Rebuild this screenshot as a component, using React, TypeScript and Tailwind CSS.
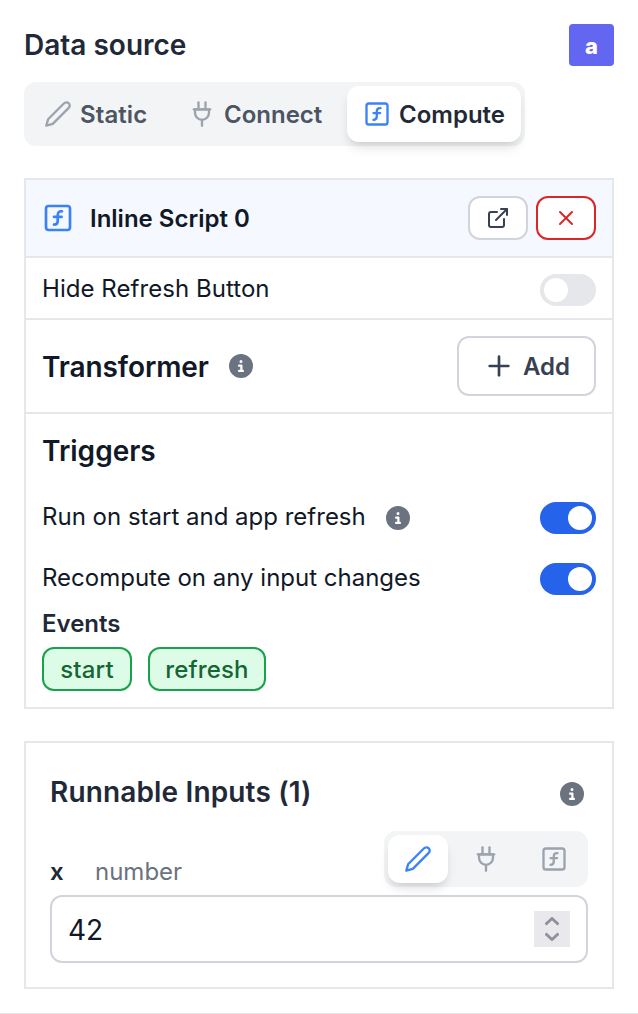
import type { ReactNode } from 'react';
import { FaCircleInfo } from 'react-icons/fa6';

type IconProps = { size?: number; className?: string };

function Icon({ size = 28, className = '', children }: IconProps & { children: ReactNode }) {
  return (
    <svg
      width={size}
      height={size}
      viewBox="0 0 24 24"
      fill="none"
      stroke="currentColor"
      strokeWidth="2"
      strokeLinecap="round"
      strokeLinejoin="round"
      className={`shrink-0 ${className}`}
    >
      {children}
    </svg>
  );
}

const Pencil = (p: IconProps) => (
  <Icon {...p}>
    <path d="M17 3a2.85 2.83 0 1 1 4 4L7.5 20.5 2 22l1.5-5.5Z" />
  </Icon>
);

const Plug = (p: IconProps) => (
  <Icon {...p}>
    <path d="M9 2v6" />
    <path d="M15 2v6" />
    <path d="M12 17v5" />
    <path d="M5 8h14" />
    <path d="M6 11V8h12v3a6 6 0 1 1-12 0Z" />
  </Icon>
);

const FunctionSquare = (p: IconProps) => (
  <Icon {...p}>
    <rect width="18" height="18" x="3" y="3" rx="2" />
    <path d="M9 17c2 0 2.8-1 2.8-2.8V10c0-2 1-3.3 3.2-3" />
    <path d="M9 11.2h5.7" />
  </Icon>
);

const ExternalLink = (p: IconProps) => (
  <Icon {...p}>
    <path d="M18 13v6a2 2 0 0 1-2 2H5a2 2 0 0 1-2-2V8a2 2 0 0 1 2-2h6" />
    <path d="M15 3h6v6" />
    <path d="M10 14 21 3" />
  </Icon>
);

const Close = (p: IconProps) => (
  <Icon {...p}>
    <path d="M18 6 6 18" />
    <path d="m6 6 12 12" />
  </Icon>
);

const Plus = (p: IconProps) => (
  <Icon {...p}>
    <path d="M5 12h14" />
    <path d="M12 5v14" />
  </Icon>
);

const activeShadow = 'shadow-[0_8px_12px_-2px_rgba(0,0,0,0.1),0_4px_8px_-4px_rgba(0,0,0,0.1)]';

function Toggle({ on = false }: { on?: boolean }) {
  return (
    <button
      role="switch"
      aria-checked={on}
      className={`flex h-8 w-14 shrink-0 items-center rounded-full px-1 ${on ? 'justify-end bg-[#2563eb]' : 'justify-start bg-[#e5e7eb]'}`}
    >
      <span className="size-6 rounded-full bg-white" />
    </button>
  );
}

function Pill({ className, children }: { className: string; children: ReactNode }) {
  return (
    <span
      className={`flex h-11 items-center justify-center rounded-xl border-2 border-[#16a34a] bg-[#dcfce7] pt-0.5 text-[24px] font-medium tracking-[0.15px] text-[#166534] ${className}`}
    >
      {children}
    </span>
  );
}

export default function App() {
  return (
    <div className="flex h-[1014px] w-[638px] flex-col overflow-hidden border-b border-[#e5e7eb] bg-white font-['Inter',sans-serif] text-[24px] leading-8 text-[#111827]">
      <header className="flex items-center justify-between px-6 pt-6">
        <h1 className="text-[28px] font-semibold text-[#1f2937]">Data source</h1>
        <span className="flex h-[42px] w-[45px] items-center justify-center rounded bg-[#6366f1] pt-0.5 text-[22px] font-extrabold text-white">
          a
        </span>
      </header>

      <div className="mt-4 ml-6 flex h-16 w-[501px] shrink-0 rounded-xl bg-[#f3f4f6] p-1 font-semibold text-[#4b5563]">
        <button className="flex w-[136px] items-center gap-2 pl-4">
          <Pencil className="text-[#9ca3af]" />
          <span className="pt-0.5 tracking-[0.1px]">Static</span>
        </button>
        <button className="flex w-[183px] items-center gap-2 pl-6">
          <Plug className="text-[#9ca3af]" />
          <span className="pt-0.5">Connect</span>
        </button>
        <button
          className={`flex w-[174px] items-center gap-2 rounded-xl bg-white pl-4 text-[#1f2937] ${activeShadow}`}
        >
          <FunctionSquare className="text-[#3b82f6]" />
          <span className="pt-0.5">Compute</span>
        </button>
      </div>

      <section className="mx-6 mt-8 flex h-[531px] shrink-0 flex-col border-2 border-[#e5e7eb]">
        <div className="flex h-[78px] items-center border-b-2 border-[#e5e7eb] bg-[#f5f8ff] px-4">
          <FunctionSquare size={32} className="text-[#3b82f6]" />
          <span className="ml-4 flex-1 pt-0.5 font-semibold">Inline Script 0</span>
          <button className="flex h-11 w-15 items-center justify-center rounded-xl border-2 border-[#d1d5db] bg-white text-[#374151]">
            <ExternalLink size={24} />
          </button>
          <button className="ml-2 flex h-11 w-15 items-center justify-center rounded-xl border-2 border-[#dc2626] bg-white text-[#dc2626]">
            <Close size={24} />
          </button>
        </div>

        <div className="flex h-[62px] items-start justify-between border-b-2 border-[#e5e7eb] px-4">
          <span className="mt-[15px] tracking-[0.05px]">Hide Refresh Button</span>
          <span className="mt-4 flex">
            <Toggle />
          </span>
        </div>

        <div className="flex h-[94px] items-center border-b-2 border-[#e5e7eb] px-4">
          <h2 className="w-[167px] pt-0.5 text-[28px] font-semibold tracking-[-0.1px]">Transformer</h2>
          <FaCircleInfo size={24} className="ml-5 text-[#6b7280]" />
          <button className="ml-auto flex h-15 w-[139px] items-center gap-2 rounded-xl border-2 border-[#d1d5db] bg-white pl-6 font-semibold text-[#374151]">
            <Plus size={32} />
            <span className="pt-0.5">Add</span>
          </button>
        </div>

        <div className="flex flex-col px-4 pt-[21px]">
          <h2 className="text-[28px] font-semibold">Triggers</h2>
          <div className="mt-[35px] flex h-8 items-center">
            <span className="-mt-0.5 w-[324px] whitespace-nowrap">Run on start and app refresh</span>
            <FaCircleInfo size={24} className="ml-5 text-[#6b7280]" />
            <span className="ml-auto flex">
              <Toggle on />
            </span>
          </div>
          <div className="mt-[29px] flex h-8 items-center justify-between">
            <span className="-mt-0.5">Recompute on any input changes</span>
            <Toggle on />
          </div>
          <h3 className="mt-[13px] font-semibold text-[#1f2937]">Events</h3>
          <div className="mt-[7px] flex gap-4">
            <Pill className="w-[90px]">start</Pill>
            <Pill className="w-[118px]">refresh</Pill>
          </div>
        </div>
      </section>

      <section className="mx-6 mt-8 flex h-[248px] shrink-0 flex-col border-2 border-[#e5e7eb] px-6">
        <div className="mt-[33px] flex h-8 items-center justify-between">
          <h2 className="text-[28px] font-semibold tracking-[0.15px] text-[#1f2937]">Runnable Inputs (1)</h2>
          <FaCircleInfo size={24} className="mt-1 mr-1 text-[#6b7280]" />
        </div>
        <div className="mt-[23px] flex h-14 items-end">
          <span className="-mb-px w-[45px] font-semibold text-[#1f2937]">x</span>
          <span className="-mb-px flex-1 text-[#6b7280]">number</span>
          <div className="flex h-14 w-[204px] rounded-xl bg-[#f3f4f6] p-1 text-[#9ca3af]">
            <button
              className={`flex h-12 w-15 items-center justify-center rounded-xl bg-white text-[#3b82f6] ${activeShadow}`}
            >
              <Pencil />
            </button>
            <button className="flex h-12 w-[76px] items-center justify-center">
              <Plug />
            </button>
            <button className="flex h-12 w-15 items-center justify-center">
              <FunctionSquare />
            </button>
          </div>
        </div>
        <div className="mt-2 flex h-[68px] items-center justify-between rounded-xl border-2 border-[#d1d5db] bg-white pr-4 pl-4 text-[28px]">
          <span className="pt-0.5">42</span>
          <span className="flex size-9 items-center justify-center bg-[#e9e9ed] text-[#8f8f9d]">
            <svg width="14" height="24" viewBox="0 0 14 24" fill="none" stroke="currentColor" strokeWidth="2.8">
              <path d="M0.5 7.5 7 1.5l6.5 6" />
              <path d="M0.5 16.5 7 22.5l6.5-6" />
            </svg>
          </span>
        </div>
      </section>
    </div>
  );
}
